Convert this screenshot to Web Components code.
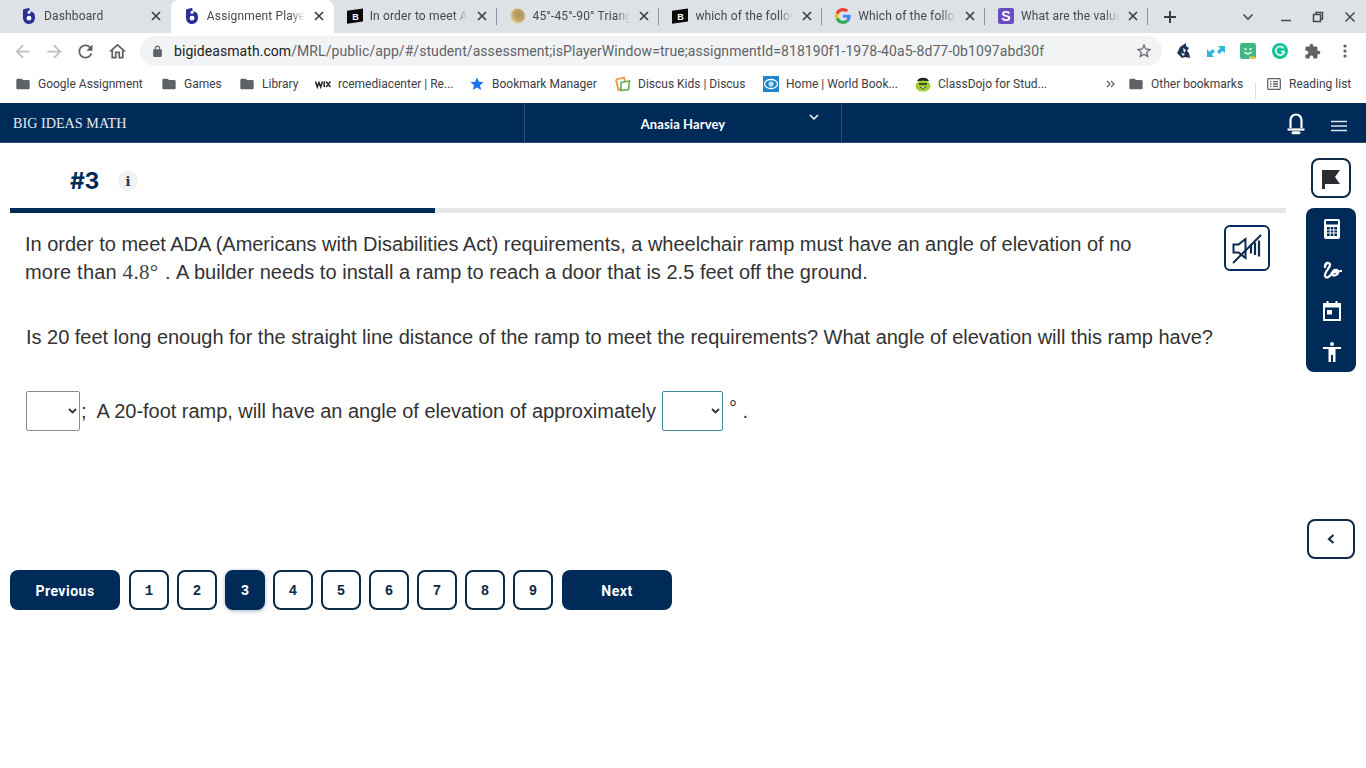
<!DOCTYPE html>
<html><head><meta charset="utf-8"><title>Assignment Player</title>
<style>
html,body{margin:0;padding:0;background:#fff;height:768px;overflow:hidden;font-family:"Liberation Sans",sans-serif}
page-shell{display:block;width:1366px;height:768px;overflow:hidden}
svg{display:block}
</style></head><body>
<page-shell>
  <tab-strip>
    <chrome-tab><big-fav slot="icon"></big-fav>Dashboard</chrome-tab>
    <chrome-tab active><big-fav slot="icon"></big-fav>Assignment Player</chrome-tab>
    <chrome-tab><block-fav slot="icon"></block-fav>In order to meet ADA</chrome-tab>
    <chrome-tab sep><svg slot="icon" width="16" height="16" viewBox="0 0 16 16"><defs><radialGradient id="gold" cx=".62" cy=".42" r=".7"><stop offset="0" stop-color="#a98f5e"/><stop offset=".55" stop-color="#c4a768"/><stop offset="1" stop-color="#f6e8bd"/></radialGradient></defs><circle cx="7.500" cy="8" r="7.500" fill="url(#gold)"/></svg>45°-45°-90° Triangles</chrome-tab>
    <chrome-tab sep><block-fav slot="icon"></block-fav>which of the following</chrome-tab>
    <chrome-tab sep><svg slot="icon" width="16" height="16" viewBox="0 0 48 48"><path fill="#EA4335" d="M24 9.500c3.500 0 6.700 1.300 9.100 3.500l6.800-6.800C35.800 2.400 30.200 0 24 0 14.600 0 6.500 5.400 2.600 13.200l7.900 6.100C12.400 13.700 17.700 9.500 24 9.500z"/><path fill="#4285F4" d="M46.900 24.500c0-1.600-.1-3.100-.4-4.500H24v9h12.900c-.6 3-2.200 5.500-4.700 7.200l7.700 6c4.500-4.200 7-10.300 7-17.700z"/><path fill="#FBBC05" d="M10.500 28.700c-.5-1.500-.8-3-.8-4.700s.3-3.200.8-4.700l-7.900-6.100C.9 16.500 0 20.100 0 24s.9 7.500 2.600 10.800z"/><path fill="#34A853" d="M24 48c6.500 0 11.900-2.100 15.900-5.800l-7.700-6c-2.100 1.400-4.900 2.300-8.200 2.300-6.300 0-11.600-4.200-13.500-9.800l-7.900 6.100C6.500 42.600 14.600 48 24 48z"/></svg>Which of the following</chrome-tab>
    <chrome-tab sep last><svg slot="icon" width="16" height="16" viewBox="0 0 16 16"><rect width="16" height="16" rx="2" fill="#6a4bc4"/><text x="8" y="13" font-family="Liberation Sans" font-weight="700" font-size="14" fill="#fff" text-anchor="middle">S</text></svg>What are the values</chrome-tab>
  </tab-strip>
  <browser-toolbar></browser-toolbar>
  <bookmark-bar>
    <book-mark w="146"><svg slot="icon" width="16" height="16" viewBox="0 0 24 24" fill="#5f6368"><path d="M10 4H4c-1.100 0-2 .9-2 2v12c0 1.100.9 2 2 2h16c1.100 0 2-.9 2-2V8c0-1.100-.9-2-2-2h-8l-2-2z"/></svg>Google Assignment</book-mark>
    <book-mark w="78"><svg slot="icon" width="16" height="16" viewBox="0 0 24 24" fill="#5f6368"><path d="M10 4H4c-1.100 0-2 .9-2 2v12c0 1.100.9 2 2 2h16c1.100 0 2-.9 2-2V8c0-1.100-.9-2-2-2h-8l-2-2z"/></svg>Games</book-mark>
    <book-mark w="76"><svg slot="icon" width="16" height="16" viewBox="0 0 24 24" fill="#5f6368"><path d="M10 4H4c-1.100 0-2 .9-2 2v12c0 1.100.9 2 2 2h16c1.100 0 2-.9 2-2V8c0-1.100-.9-2-2-2h-8l-2-2z"/></svg>Library</book-mark>
    <book-mark w="154"><svg slot="icon" width="16" height="16" viewBox="0 0 16 16"><path d="M.5 5.500 2.300 11 4 6.500 5.700 11 7.500 5.500M9.200 5.500V11M11 5.500l4.500 5.500M15.500 5.500 11 11" fill="none" stroke="#222" stroke-width="1.500"/></svg>rcemediacenter | Re...</book-mark>
    <book-mark w="146"><svg slot="icon" width="16" height="16" viewBox="0 0 24 24" fill="#1a73e8"><path d="M12 17.270 18.180 21l-1.640-7.030L22 9.240l-7.190-.61L12 2 9.190 8.630 2 9.240l5.460 4.730L5.820 21z"/></svg>Bookmark Manager</book-mark>
    <book-mark w="148"><svg slot="icon" width="16" height="16" viewBox="0 0 16 16" fill="none"><path d="M1 3.500 9 1.500 10 5" stroke="#e8963a" stroke-width="1.800"/><path d="M1 3.500 3.500 14 6 13" stroke="#e8963a" stroke-width="1.800"/><path d="M6 6.500 14.500 5l-1 8.500L6 14.500z" stroke="#5cb04c" stroke-width="1.600"/></svg>Discus Kids | Discus</book-mark>
    <book-mark w="152"><svg slot="icon" width="16" height="16" viewBox="0 0 16 16"><rect width="16" height="16" fill="#1f86c7"/><ellipse cx="8" cy="8" rx="6.500" ry="4.500" fill="none" stroke="#fff" stroke-width="1.300"/><circle cx="8" cy="8" r="2.500" fill="#bfe3f5"/></svg>Home | World Book...</book-mark>
    <book-mark w="184"><svg slot="icon" width="16" height="16" viewBox="0 0 16 16"><path d="M2 5C3 .5 13 .5 14 5z" fill="#222"/><ellipse cx="8" cy="10" rx="7.500" ry="5.500" fill="#9ccc2f"/><path d="M4 8h8" stroke="#222" stroke-width="1.500"/><path d="M5 11q3 3 6 0" fill="#fff" stroke="#222" stroke-width=".8"/></svg>ClassDojo for Stud...</book-mark>
    <more-mark></more-mark>
    <book-mark w="138"><svg slot="icon" width="16" height="16" viewBox="0 0 24 24" fill="#5f6368"><path d="M10 4H4c-1.100 0-2 .9-2 2v12c0 1.100.9 2 2 2h16c1.100 0 2-.9 2-2V8c0-1.100-.9-2-2-2h-8l-2-2z"/></svg>Other bookmarks</book-mark>
    <book-mark w="90" rule><svg slot="icon" width="16" height="16" viewBox="0 0 16 16" fill="none" stroke="#5f6368" stroke-width="1.300"><rect x="1.700" y="2.700" width="12.600" height="10.600" rx="1"/><path d="M4 5.700h1.500M7 5.700h5M4 8h1.500M7 8h5M4 10.300h1.500M7 10.300h5"/></svg>Reading list</book-mark>
  </bookmark-bar>
  <app-header></app-header>
  <player-main></player-main>
</page-shell>
<script>
const def=(name,html,cls)=>{
  const tpl=document.createElement('template');tpl.innerHTML=html;
  customElements.define(name,class extends HTMLElement{
    constructor(){super();this.attachShadow({mode:'open'}).appendChild(tpl.content.cloneNode(true))}
    connectedCallback(){cls&&cls(this)}
  });
};
const P={
 back:'M20 11H7.830l5.590-5.590L12 4l-8 8 8 8 1.410-1.410L7.830 13H20v-2z',
 reload:'M17.650 6.350C16.200 4.900 14.210 4 12 4c-4.420 0-7.990 3.580-7.990 8s3.570 8 7.990 8c3.730 0 6.840-2.550 7.730-6h-2.080c-.82 2.330-3.040 4-5.650 4-3.310 0-6-2.690-6-6s2.690-6 6-6c1.660 0 3.140.69 4.220 1.780L13 11h7V4l-2.350 2.350z',
 home:'M12 5.690l5 4.500V18h-2v-6H9v6H7v-7.810l5-4.500M12 3L2 12h3v8h6v-6h2v6h6v-8h3L12 3z',
 star:'M22 9.240l-7.190-.62L12 2 9.190 8.630 2 9.240l5.460 4.730L5.820 21 12 17.270 18.180 21l-1.630-7.030L22 9.240zM12 15.400l-3.760 2.270 1-4.280-3.320-2.880 4.380-.38L12 6.100l1.710 4.040 4.380.38-3.320 2.880 1 4.280L12 15.400z',
 puzzle:'M20.500 11H19V7c0-1.100-.9-2-2-2h-4V3.500C13 2.120 11.880 1 10.500 1S8 2.120 8 3.500V5H4c-1.100 0-1.990.9-1.990 2v3.800H3.500c1.490 0 2.700 1.210 2.700 2.700s-1.210 2.700-2.700 2.700H2V20c0 1.100.9 2 2 2h3.800v-1.500c0-1.490 1.210-2.700 2.700-2.700 1.490 0 2.700 1.210 2.700 2.700V22H17c1.100 0 2-.9 2-2v-4h1.500c1.380 0 2.500-1.120 2.500-2.500S21.880 11 20.500 11z',
 lock:'M18 8h-1V6c0-2.760-2.240-5-5-5S7 3.240 7 6v2H6c-1.100 0-2 .9-2 2v10c0 1.100.9 2 2 2h12c1.100 0 2-.9 2-2V10c0-1.100-.9-2-2-2zM9 6c0-1.660 1.340-3 3-3s3 1.340 3 3v2H9V6z'
};
def('big-fav',`<style>:host{display:block;width:16px;height:16px}</style><svg width="16" height="16" viewBox="0 0 16 16"><path d="M2.500 1.200 7.500 0c.7 0 1 .5 1 1v2.500c3-.2 5.500 1.300 5.500 5.800S11.500 16 8 16s-6-2.500-6-6.500V2z" fill="#2b2f96"/><circle cx="8" cy="4.300" r="1.500" fill="#fff"/><circle cx="8" cy="10.200" r="2.400" fill="#fff"/></svg>`);
def('block-fav',`<style>:host{display:block;width:16px;height:16px}</style><svg width="16" height="16" viewBox="0 0 16 16"><path d="M0 2.700 16 .5v13L0 15.700z" fill="#0b0b0b"/><text x="8.500" y="11.500" font-family="Liberation Sans" font-weight="700" font-size="9" fill="#fff" text-anchor="middle">B</text></svg>`);
def('tab-strip',`<style>:host{display:flex;height:33px;background:#dee1e6;padding-left:8px;align-items:stretch;font:12px Roboto,sans-serif;box-sizing:border-box}
.plus{width:44px;display:flex;align-items:center;justify-content:center;margin-right:-1px}
.ctl{display:flex;align-items:center;justify-content:center;width:32px}
.sp{flex:1}
.drop{margin-right:6px}
</style><slot></slot>
<div class="plus"><svg width="14" height="14" viewBox="0 0 14 14"><path d="M7 1v12M1 7h12" stroke="#3c4043" stroke-width="2"/></svg></div>
<div class="sp"></div>
<div class="ctl drop"><svg width="12" height="8" viewBox="0 0 12 8"><path d="M1.500 1.500 6 6l4.500-4.500" fill="none" stroke="#45494e" stroke-width="1.600"/></svg></div>
<div class="ctl"><svg width="12" height="12" viewBox="0 0 12 12"><path d="M1 9.500h10" stroke="#45494e" stroke-width="1.500"/></svg></div>
<div class="ctl"><svg width="12" height="12" viewBox="0 0 12 12" fill="none" stroke="#45494e" stroke-width="1.500"><path d="M4 3V1.500h6.500V8H9"/><rect x="1.500" y="3.500" width="7" height="7"/></svg></div>
<div class="ctl"><svg width="12" height="12" viewBox="0 0 12 12"><path d="M1.500 1.500l9 9M10.500 1.500l-9 9" stroke="#45494e" stroke-width="1.500"/></svg></div>`);
def('chrome-tab',`<style>:host{display:flex;width:162.850px;height:33px;box-sizing:border-box;align-items:center;padding:0 8px 0 13px;color:#45494e;position:relative;letter-spacing:.15px}
:host([active]){background:#fff;border-radius:8px 8px 0 0}
:host([sep])::before{content:"";position:absolute;left:-1px;top:8px;height:17px;width:1px;background:#90959b}
:host([last])::after{content:"";position:absolute;right:0;top:8px;height:17px;width:1px;background:#90959b}
.i{width:16px;height:16px;flex:none;margin-right:7px;margin-top:-1px}
.t{flex:1;min-width:0;white-space:nowrap;overflow:hidden;margin-top:-2px;line-height:16px;-webkit-mask-image:linear-gradient(90deg,#000 85%,transparent 100%);mask-image:linear-gradient(90deg,#000 85%,transparent 100%)}
.x{flex:none;width:14px;height:12px;margin-left:7px;display:flex;justify-content:center;margin-top:-1px}
</style><div class="i"><slot name="icon"></slot></div><div class="t"><slot></slot></div>
<div class="x"><svg width="10" height="10" viewBox="0 0 10 10" style="margin-top:1px"><path d="M1 1l8 8M9 1 1 9" stroke="#3c4043" stroke-width="1.700"/></svg></div>`);
def('browser-toolbar',`<style>:host{display:flex;height:36px;align-items:center;background:#fff;box-sizing:border-box;padding-left:6px}
.b{width:32px;height:32px;display:flex;align-items:center;justify-content:center;flex:none}
.omni{flex:none;width:1022px;height:30px;margin:0 6px 0 6px;background:#f1f3f4;border-radius:15px;display:flex;align-items:center;padding:0 9px 0 11px;box-sizing:border-box;font:14px Roboto,sans-serif;color:#5f6368;letter-spacing:.065px}
.omni b{font-weight:400;color:#202124}
.u{flex:1;white-space:nowrap;overflow:hidden;margin-left:10px}
</style>
<div class="b"><svg width="21" height="21" viewBox="0 0 24 24" fill="#bcc0c4"><path d="${P.back}"/></svg></div>
<div class="b"><svg width="21" height="21" viewBox="0 0 24 24" fill="#bcc0c4" style="transform:scaleX(-1)"><path d="${P.back}"/></svg></div>
<div class="b"><svg width="21" height="21" viewBox="0 0 24 24" fill="#5f6368" style="margin-right:1px"><path d="${P.reload}"/></svg></div>
<div class="b"><svg width="21" height="21" viewBox="0 0 24 24" fill="#5f6368" style="margin-right:1px"><path d="${P.home}"/></svg></div>
<div class="omni"><svg width="13" height="13" viewBox="0 0 24 24" fill="#5f6368"><path d="${P.lock}"/></svg>
<div class="u"><b>bigideasmath.com</b>/MRL/public/app/#/student/assessment;isPlayerWindow=true;assignmentId=818190f1-1978-40a5-8d77-0b1097abd30f</div>
<svg width="18" height="18" viewBox="0 0 24 24" fill="#5f6368"><path d="${P.star}"/></svg></div>
<div class="b"><svg width="16" height="16" viewBox="0 0 16 16"><path d="M10 0 4 4 1 10l5 5 3-1 5 1-1-5-2-2 2-3-3-2z" fill="#1c3557"/><path d="M7 5l3 2-2 3zM5 10l4 1-2 2z" fill="#fff"/></svg></div>
<div class="b"><svg width="18" height="13" viewBox="0 0 18 13" fill="#2fb6d6"><path d="M0 4v8h7L4.700 9.500 8 6.500 5.500 4 2.500 7zM18 8V1h-7l2.300 2.300L10 6.500l2.500 2.500L15.500 6z"/></svg></div>
<div class="b"><svg width="16" height="17" viewBox="0 0 16 17"><rect width="16" height="16" rx="2.500" fill="#3fb984"/><circle cx="5.500" cy="6" r="1" fill="#fff"/><circle cx="10.500" cy="6" r="1" fill="#fff"/><path d="M4.500 9q3.500 3.500 7 0" fill="none" stroke="#fff" stroke-width="1.300"/><rect x="9" y="13.500" width="6" height="2.500" fill="#f4c542"/></svg></div>
<div class="b"><svg width="16" height="16" viewBox="0 0 16 16"><circle cx="8" cy="8" r="8" fill="#15c39a"/><path d="M11.500 5.200A4.300 4.300 0 1 0 12.300 8.500H9" fill="none" stroke="#fff" stroke-width="1.500"/></svg></div>
<div class="b"><svg width="17" height="17" viewBox="0 0 24 24" fill="#5f6368"><path d="${P.puzzle}"/></svg></div>
<div class="b" style="margin-left:1px"><svg width="4" height="14" viewBox="0 0 4 14" fill="#5f6368"><circle cx="2" cy="2" r="1.600"/><circle cx="2" cy="7" r="1.600"/><circle cx="2" cy="12" r="1.600"/></svg></div>`);
def('bookmark-bar',`<style>:host{display:flex;height:34px;align-items:flex-start;background:#fff;box-sizing:border-box;padding:0 0 0 15px;font:12px Roboto,sans-serif;color:#3c4043}
.inner{display:flex;height:30px;align-items:center;width:100%}
</style><div class="inner"><slot></slot></div>`);
def('book-mark',`<style>:host{display:flex;align-items:center;flex:none;white-space:nowrap;position:relative;box-sizing:border-box}
.i{width:16px;height:16px;margin-right:7px;flex:none}
:host([rule])::before{content:"";position:absolute;left:-11px;top:7px;height:16px;width:1px;background:#dadce0}
</style><div class="i"><slot name="icon"></slot></div><slot></slot>`,
 el=>{el.style.width=el.getAttribute('w')+'px'});
def('more-mark',`<style>:host{display:flex;width:18px;margin-left:2px;margin-right:9px;justify-content:center;align-items:center;flex:none}
</style><svg width="9" height="8" viewBox="0 0 9 8" fill="none" stroke="#5f6368" stroke-width="1.300"><path d="M1 1l3 3-3 3M5 1l3 3-3 3"/></svg>`);
def('app-header',`<style>:host{display:flex;height:40px;background:#002b59;border-bottom:1px solid #2a5075;box-sizing:border-box;color:#fff;align-items:stretch}
.brand{width:524px;flex:none;padding:2px 0 0 13px;box-sizing:border-box;display:flex;align-items:center;font:14.200px "Liberation Serif",serif;color:#e4ebf2}
.user{width:318px;flex:none;box-sizing:border-box;border-left:1px solid #2b507a;border-right:1px solid #2b507a;display:flex;align-items:center;justify-content:center;font:700 13px Lato,sans-serif;letter-spacing:.1px;position:relative;padding-top:3px}
.chev{position:absolute;left:284px;top:11px}
.sp{flex:1}
.ic{display:flex;align-items:center;justify-content:center}
</style>
<div class="brand">BIG IDEAS MATH</div>
<div class="user">Anasia Harvey<svg class="chev" width="10" height="7" viewBox="0 0 10 7" fill="none" stroke="#fff" stroke-width="1.500"><path d="M1 1l4 4 4-4"/></svg></div>
<div class="sp"></div>
<div class="ic" style="width:22px;padding-top:2px"><svg width="20" height="23" viewBox="0 0 20 23" fill="none" stroke="#fff" stroke-width="2.200"><path d="M4.500 16V8a5.500 5.500 0 0 1 11 0v8"/><path d="M1.500 17.500h17" stroke-width="2.200"/><path d="M7 20.800h6" stroke-width="3" stroke-linecap="round"/></svg></div>
<div class="ic" style="width:16px;margin-left:24px;margin-right:19px;padding-top:6px"><svg width="16" height="12" viewBox="0 0 16 12" stroke="#dfe6ee" stroke-width="1.700"><path d="M0 1.500h16M0 6h16M0 10.500h16"/></svg></div>`);
def('player-main',`<style>:host{display:flex;height:625px;background:#fff;color:#333}
.l{width:1276px;margin-left:10px;flex:none;display:flex;flex-direction:column}
.s{flex:1;padding:0 10px 0 20px;display:flex;flex-direction:column;align-items:center}
</style><div class="l"><question-head></question-head><progress-line></progress-line><question-body></question-body><page-nav></page-nav></div>
<div class="s"><side-tools></side-tools></div>`);
def('question-head',`<style>:host{display:flex;height:65px;align-items:center;padding-left:60px;box-sizing:border-box;padding-top:11px}
.h{font:700 23px "Inter","Lato",sans-serif;color:#002b59;letter-spacing:-.5px;width:47px}
.i{width:20px;height:20px;border-radius:50%;background:#f1f2f4;display:flex;align-items:center;justify-content:center;font:700 13px "DejaVu Serif",serif;color:#222b3a;margin-left:1px}
</style><div class="h">#3</div><div class="i">i</div>`);
def('progress-line',`<style>:host{display:block;height:5px;background:#e6e6e6}.f{width:425px;height:5px;background:#002b59}</style><div class="f"></div>`);
def('drop-box',`<style>:host{display:block;position:relative;height:40px;flex:none}
select{appearance:none;-webkit-appearance:none;display:block;width:100%;box-sizing:border-box;height:40px;border:1px solid var(--bd,#8a8a8a);border-radius:2px;background:#fff;font:16px "Liberation Sans",sans-serif;color:#222;padding:0}
svg{position:absolute;right:3px;top:17px;pointer-events:none}
</style><select aria-label="answer"><option></option></select><svg width="9" height="6" viewBox="0 0 9 6" fill="none" stroke="#333" stroke-width="1.800"><path d="M1 1l3.500 3.500L8 1"/></svg>`);
def('question-body',`<style>:host{display:block;height:357px;box-sizing:border-box;padding:17px 0 0 15px;font:20px/28px "Liberation Sans",sans-serif;color:#333;letter-spacing:-.025px}
.top{display:flex;align-items:flex-start}
.p1{width:1150px;flex:none}
.ln{display:block;white-space:pre;height:28px}
.mt{letter-spacing:.2px}
.rest{letter-spacing:.02px}
.m{font-family:"Liberation Serif",serif;font-size:21px;line-height:20px;color:#444;letter-spacing:.3px;margin-right:1px}
.aud{width:46px;height:46px;margin:-5px 0 0 49px;box-sizing:border-box;border:2px solid #002b59;border-radius:6px;display:flex;align-items:center;justify-content:center;background:#fff}
.p2{margin:37px 0 0 1px;white-space:nowrap;letter-spacing:-.02px}
.row{margin:40px 0 0 1px;display:flex;align-items:center;height:40px;white-space:pre}
.a{width:54px}.b{width:61px;margin-left:6px;--bd:#3d8a9c}
.txt{margin-left:1px;letter-spacing:-.03px}
.deg{margin:-6px 0 0 6px}
</style>
<div class="top"><div class="p1"><span class="ln">In order to meet ADA (Americans with Disabilities Act) requirements, a wheelchair ramp must have an angle of elevation of no</span><span class="ln"><span class="mt">more than </span><span class="m">4.8°</span> <span>.</span> <span class="rest">A builder needs to install a ramp to reach a door that is 2.5 feet off the ground.</span></span></div>
<div class="aud"><svg width="32" height="32" viewBox="0 0 32 32" fill="none" stroke="#0d2a4a"><path d="M2.500 12.500h5l7-5.500v19l-7-5.500h-5z" stroke-width="2"/><path d="M20 12.500v9M24 10.500v12.500M28 8.500v16" stroke-width="2.200"/><path d="M2 31 30 3" stroke-width="2"/></svg></div></div>
<div class="p2">Is 20 feet long enough for the straight line distance of the ramp to meet the requirements? What angle of elevation will this ramp have?</div>
<div class="row"><drop-box class="a"></drop-box><span class="txt">;  A 20-foot ramp, will have an angle of elevation of approximately</span><drop-box class="b"></drop-box><span class="deg">°</span><span> .</span></div>`);
def('page-nav',`<style>:host{display:flex;height:40px;align-items:center;font:700 14px Roboto,sans-serif;letter-spacing:.5px;color:#0f2a47}
.w{width:110px;height:40px;padding-top:1px;box-sizing:border-box;background:#002b59;color:#fff;border-radius:8px;display:flex;align-items:center;justify-content:center;flex:none}
.n{width:40px;height:40px;padding-top:1px;box-sizing:border-box;border:2px solid #0f2a47;border-radius:8px;display:flex;align-items:center;justify-content:center;flex:none;margin-right:8px;background:#fff;font:700 14px "Liberation Mono",monospace;letter-spacing:0}
.n.on{background:#002b59;border-color:#002b59;color:#fff;box-shadow:0 1px 4px rgba(0,43,89,.35)}
.nums{display:flex;margin-left:9px;margin-right:1px}
</style><div class="w">Previous</div><div class="nums"><div class="n">1</div><div class="n">2</div><div class="n on">3</div><div class="n">4</div><div class="n">5</div><div class="n">6</div><div class="n">7</div><div class="n">8</div><div class="n">9</div></div><div class="w">Next</div>`);
def('side-tools',`<style>:host{display:flex;flex-direction:column;align-items:center;padding-top:15px}
.flag{width:40px;height:40px;box-sizing:border-box;border:2px solid #0f2a47;border-radius:8px;display:flex;align-items:center;justify-content:center;background:#fff;padding-top:3px}
.panel{width:50px;height:164px;margin-top:10px;background:#002b59;border-radius:8px;display:flex;flex-direction:column;align-items:center}
.t{flex:1;display:flex;align-items:center;justify-content:center;width:100%;padding-left:1px;box-sizing:border-box}
.col{width:48px;height:40px;margin-top:147px;box-sizing:border-box;border:2px solid #0f2a47;border-radius:8px;display:flex;align-items:center;justify-content:center;background:#fff}
</style>
<div class="flag"><svg width="18" height="19" viewBox="0 0 18 19" fill="#2a2d32"><path d="M0 0h18l-5 7 5 7H3v5H0z"/></svg></div>
<div class="panel">
<div class="t"><svg width="16" height="20" viewBox="0 0 16 20"><rect width="16" height="20" rx="2" fill="#fff"/><rect x="2" y="2" width="12" height="3.500" fill="#002b59"/><rect x="3" y="8" width="10" height="9" fill="#002b59"/><g fill="#fff"><rect x="5.700" y="8" width="1" height="9"/><rect x="9.300" y="8" width="1" height="9"/><rect x="3" y="10.500" width="10" height="1"/><rect x="3" y="13.500" width="10" height="1"/></g></svg></div>
<div class="t"><svg width="20" height="18" viewBox="0 0 20 18" fill="none" stroke="#fff" stroke-width="2.300" stroke-linecap="round"><path d="M3 6C3 1 8 1 8 4 8 7 2 11 3 15c1 3 5 1 7-3s6-4 6-1-5 5-6 2c0-2 5-2 9-3"/></svg></div>
<div class="t"><svg width="18" height="20" viewBox="0 0 18 20"><path d="M3.500 0h2v2h7V0h2v2H18v18H0V2h3.500zM2 6.500V18h14V6.500z" fill="#fff"/><rect x="4" y="9" width="5" height="4.500" fill="#fff"/></svg></div>
<div class="t"><svg width="18" height="20" viewBox="0 0 18 20" fill="#fff"><circle cx="9" cy="2" r="2"/><path d="M0 5h18v2h-5.500v13H10v-7H8v7H5.500V7H0z"/></svg></div>
</div>
<div class="col"><svg width="8" height="10" viewBox="0 0 8 10" fill="none" stroke="#1c2b3c" stroke-width="2.200"><path d="M6.500 1 2 5l4.500 4"/></svg></div>`);
</script>
</body></html>
